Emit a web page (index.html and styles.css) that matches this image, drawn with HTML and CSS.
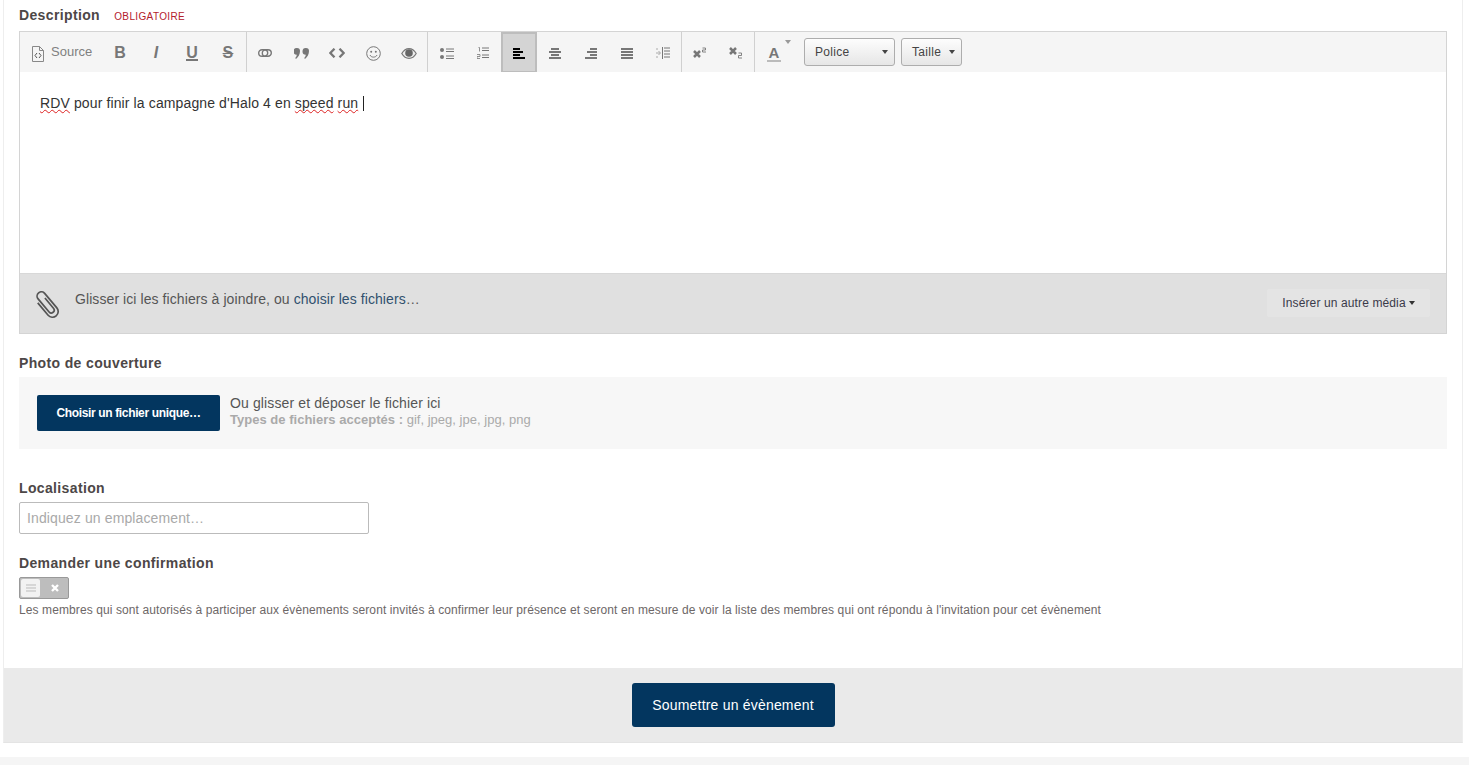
FILE: index.html
```html
<!DOCTYPE html>
<html lang="fr">
<head>
<meta charset="utf-8">
<title>Soumettre un évènement</title>
<link rel="stylesheet" href="styles.css">
</head>
<body>

<div class="panel">
  <div class="form">

    <div class="label first">Description <span class="required">OBLIGATOIRE</span></div>
    <div class="editor">
      <div class="toolbar">
        <div class="group">
          <span class="btn btn-source">
            <svg width="12" height="16" viewBox="0 0 12 16"><path d="M.5 .5h7l4 4v11h-11z M7.500 .5v4h4" fill="none" stroke="#888"/><path d="M5 7l-2 2.500 2 2.500M7 7l2 2.500-2 2.500" fill="none" stroke="#555"/></svg>
            <span class="source-text">Source</span>
          </span>
          <span class="btn"><b class="glyph">B</b></span>
          <span class="btn"><b class="glyph glyph-i">I</b></span>
          <span class="btn"><b class="glyph glyph-u">U</b></span>
          <span class="btn"><b class="glyph glyph-s">S</b></span>
        </div>
        <div class="group">
          <span class="btn"><svg width="14" height="8" viewBox="0 0 14 8"><rect x=".7" y=".7" width="9" height="6.600" rx="3.300" fill="none" stroke="#777" stroke-width="1.400"/><rect x="4.300" y=".7" width="9" height="6.600" rx="3.300" fill="none" stroke="#777" stroke-width="1.400"/></svg></span>
          <span class="btn"><svg width="15" height="11" viewBox="0 0 15 11"><path d="M3 0a3 3 0 0 1 3 3c0 3-1.500 6-4 8l-.8-1c1-1 1.500-2 1.600-3.200a3 3 0 0 1 .2-6.800zM12 0a3 3 0 0 1 3 3c0 3-1.500 6-4 8l-.8-1c1-1 1.500-2 1.600-3.200a3 3 0 0 1 .2-6.800z" fill="#777"/></svg></span>
          <span class="btn"><svg width="16" height="10" viewBox="0 0 16 10"><path d="M5.500 .7l-4.200 4.300 4.200 4.300M10.500 .7l4.200 4.300-4.200 4.300" fill="none" stroke="#777" stroke-width="2.300"/></svg></span>
          <span class="btn"><svg width="15" height="15" viewBox="0 0 15 15"><circle cx="7.500" cy="7.500" r="6.800" fill="none" stroke="#777"/><circle cx="5.200" cy="5.700" r="1" fill="#777"/><circle cx="9.800" cy="5.700" r="1" fill="#777"/><path d="M4 9c1 2.800 6 2.800 7 0" fill="none" stroke="#777"/></svg></span>
          <span class="btn"><svg width="16" height="11" viewBox="0 0 16 11"><path d="M.8 5.500c3.800-6.500 10.600-6.500 14.400 0-3.800 6.500-10.600 6.500-14.400 0z" fill="#eee" stroke="#777" stroke-width="1.200"/><circle cx="8" cy="5" r="3.800" fill="#666"/></svg></span>
        </div>
        <div class="group group-lists">
          <span class="btn"><svg width="14" height="11" viewBox="0 0 14 11"><circle cx="2" cy="2" r="2" fill="#777"/><circle cx="2" cy="9" r="2" fill="#777"/><path d="M6 1h8M6 3.500h8M6 8h8M6 10.500h8" stroke="#777"/></svg></span>
          <span class="btn"><svg width="12" height="12" viewBox="0 0 12 12"><path d="M1.500 .5h1v4M0 7.500h3v2h-3v2h3" fill="none" stroke="#777" stroke-width=".8"/><path d="M5 1h7M5 3.500h7M5 8h7M5 10.500h7" stroke="#777"/></svg></span>
          <span class="btn btn-on"><svg width="12" height="11" viewBox="0 0 12 11"><path d="M0 1h7M0 4h10M0 7h7M0 10h12" stroke="#000" stroke-width="2"/></svg></span>
          <span class="btn"><svg width="12" height="11" viewBox="0 0 12 11"><path d="M2 1h8M0 4h12M2 7h8M0 10h12" stroke="#777" stroke-width="2"/></svg></span>
          <span class="btn"><svg width="12" height="11" viewBox="0 0 12 11"><path d="M5 1h7M2 4h10M5 7h7M0 10h12" stroke="#777" stroke-width="2"/></svg></span>
          <span class="btn"><svg width="12" height="11" viewBox="0 0 12 11"><path d="M0 1h12M0 4h12M0 7h12M0 10h12" stroke="#777" stroke-width="2"/></svg></span>
          <span class="btn"><svg width="14" height="12" viewBox="0 0 14 12"><path d="M6.500 0v12" stroke="#777"/><path d="M8 1h6M8 4h6M8 7h6M8 10h6" stroke="#777"/><path d="M0 6h4M2.500 4l2 2-2 2M0 2h2M0 10h2" fill="none" stroke="#aaa"/></svg></span>
        </div>
        <div class="group">
          <span class="btn"><svg width="14" height="12" viewBox="0 0 14 12"><path d="M1 4l6 6M7 4l-6 6" stroke="#777" stroke-width="2.500"/><path d="M9.500 1h3v2h-3v2h3.500" fill="none" stroke="#777" stroke-width=".9"/></svg></span>
          <span class="btn"><svg width="14" height="12" viewBox="0 0 14 12"><path d="M1 1l6 6M7 1l-6 6" stroke="#777" stroke-width="2.500"/><path d="M9.500 6h3v2.500h-3v2.500h3.500" fill="none" stroke="#777" stroke-width=".9"/></svg></span>
        </div>
        <div class="group group-last">
          <span class="btn btn-color"><b class="color-a">A</b><span class="caret caret-top"></span></span>
          <span class="select select-police">Police<span class="caret"></span></span>
          <span class="select select-size">Taille<span class="caret"></span></span>
        </div>
      </div>

      <div class="editable">
        <span class="typo">RDV</span> pour finir la campagne d'Halo 4 en <span class="typo">speed</span> <span class="typo">run</span> <span class="cursor"></span>
      </div>

      <div class="dropzone">
        <svg class="clip" width="26" height="28" viewBox="0 0 26 28"><path transform="translate(13 14) rotate(-40) scale(.95) translate(-6 -16)" d="M0 8V25a6 6 0 0 0 12 0V5a4.500 4.500 0 0 0-9 0V23a3 3 0 0 0 6 0V9" fill="none" stroke="#555" stroke-width="1.800"/></svg>
        <span class="drop-text">Glisser ici les fichiers à joindre, ou <span class="link">choisir les fichiers</span>…</span>
        <span class="media-btn">Insérer un autre média<span class="caret caret-dark"></span></span>
      </div>
    </div>

    <div class="label label-photo">Photo de couverture</div>
    <div class="upload">
      <span class="upload-btn">Choisir un fichier unique…</span>
      <div class="upload-info">
        <div class="upload-hint">Ou glisser et déposer le fichier ici</div>
        <div class="upload-types"><b>Types de fichiers acceptés :</b> gif, jpeg, jpe, jpg, png</div>
      </div>
    </div>

    <div class="label label-place">Localisation</div>
    <input class="place" type="text" placeholder="Indiquez un emplacement…">

    <div class="label label-confirm">Demander une confirmation</div>
    <div class="toggle">
      <span class="knob"><svg width="10" height="8" viewBox="0 0 10 8"><path d="M0 1h10M0 4h10M0 7h10" stroke="#bbb"/></svg></span>
      <svg class="toggle-x" width="8" height="8" viewBox="0 0 8 8"><path d="M1 1l6 6M7 1l-6 6" stroke="#fff" stroke-width="2.400"/></svg>
    </div>
    <p class="help">Les membres qui sont autorisés à participer aux évènements seront invités à confirmer leur présence et seront en mesure de voir la liste des membres qui ont répondu à l'invitation pour cet évènement</p>

  </div>

  <div class="footer">
    <span class="submit">Soumettre un évènement</span>
  </div>
</div>

<div class="strip"></div>

</body>
</html>
```

FILE: styles.css
```css
html, body {
	margin: 0;
	padding: 0;
	background: #fff;
	overflow: hidden;
}
body {
	font-family: "Liberation Sans", Arial, sans-serif;
	font-size: 14px;
	letter-spacing: .12px;
	color: #555;
}
.panel {
	width: 1458px;
	margin-left: 3px;
	border-left: 1px solid #eee;
	border-right: 1px solid #eee;
	border-bottom: 1px solid #e4e4e4;
}
.form {
	height: 668px;
	box-sizing: border-box;
	padding: 5px 15px 0;
}

.label {
	font-weight: bold;
	line-height: 20px;
	letter-spacing: .36px;
	color: #4d4747;
	margin-bottom: 4px;
}
.label.first {
	margin-bottom: 6px;
}
.label-photo { margin-top: 19px; }
.label-place { margin-top: 29px; }
.label-confirm { margin-top: 19px; }
.required {
	font-weight: normal;
	font-size: 10px;
	line-height: 1;
	color: #b3202c;
	margin-left: 10px;
}

.editor {
	border: 1px solid #d4d4d4;
}
.toolbar {
	display: flex;
	height: 40px;
	background: #f5f5f5;
}
.group {
	display: flex;
	border-right: 1px solid #d0d0d0;
}
.group-lists {
	padding-left: 1px;
}
.group-last {
	border-right: 0;
	align-items: flex-start;
}
.btn {
	width: 36px;
	height: 40px;
	box-sizing: border-box;
	display: flex;
	align-items: center;
	justify-content: center;
	padding-top: 2px;
}
.btn-source {
	width: 82px;
	gap: 7px;
	justify-content: flex-start;
	padding: 3px 0 0 12px;
}
.source-text {
	font-size: 13px;
	letter-spacing: 0;
	color: #808080;
	margin: -5px 0 0 0;
}
.btn-on {
	background: #d4d4d4;
	border: 2px solid #bdbdbd;
	border-bottom-width: 1px;
}
.glyph {
	font-size: 16px;
	color: #777;
	line-height: 1;
}
.glyph-i {
	font-style: italic;
}
.glyph-u {
	border-bottom: 2px solid #777;
	line-height: 13px;
}
.glyph-s {
	text-decoration: line-through;
}
.btn-color {
	position: relative;
	width: 38px;
}
.color-a {
	font-size: 15px;
	color: #777;
	border-bottom: 2px solid #bbb;
	line-height: 15px;
	padding: 0 2px;
}
.caret {
	display: inline-block;
	border-top: 4px solid #444;
	border-left: 3px solid transparent;
	border-right: 3px solid transparent;
}
.caret-top {
	position: absolute;
	top: 8px;
	right: 2px;
	border-top-color: #999;
}
.select {
	height: 28px;
	box-sizing: border-box;
	margin-top: 6px;
	display: flex;
	align-items: center;
	justify-content: space-between;
	padding: 0 6px 0 10px;
	font-size: 12px;
	letter-spacing: .3px;
	color: #444;
	border: 1px solid #adadad;
	border-radius: 3px;
	background: linear-gradient(#fdfdfd, #e6e6e6);
}
.select-police {
	width: 91px;
	margin-left: 11px;
}
.select-size {
	width: 61px;
	margin-left: 6px;
}

.editable {
	height: 201px;
	box-sizing: border-box;
	padding: 22px 20px 0;
	background: #fff;
	color: #333;
	line-height: 18px;
}
.typo {
	text-decoration: underline wavy #d22;
	text-decoration-thickness: 1px;
	text-decoration-skip-ink: none;
}
.cursor {
	display: inline-block;
	width: 1px;
	height: 15px;
	margin-left: 1px;
	background: #222;
	vertical-align: -3px;
}

.dropzone {
	height: 60px;
	box-sizing: border-box;
	display: flex;
	align-items: center;
	padding: 0 16px 0 14px;
	background: #e0e0e0;
	border-top: 1px solid #d8d8d8;
}
.clip {
	margin-top: 2px;
}
.drop-text {
	margin-left: 15px;
	margin-top: -10px;
	letter-spacing: .08px;
	color: #555;
}
.link {
	color: #30506e;
}
.media-btn {
	margin-left: auto;
	margin-top: -2px;
	width: 163px;
	height: 28px;
	box-sizing: border-box;
	display: flex;
	align-items: center;
	justify-content: center;
	gap: 3px;
	font-size: 12px;
	color: #3a3a4a;
	background: #e4e4e4;
	border-radius: 2px;
}
.caret-dark {
	border-top-color: #333;
}

.upload {
	height: 72px;
	box-sizing: border-box;
	display: flex;
	align-items: center;
	padding: 0 18px;
	background: #f7f7f7;
}
.upload-btn {
	width: 183px;
	height: 36px;
	display: flex;
	align-items: center;
	justify-content: center;
	background: #03365f;
	color: #fff;
	font-size: 12px;
	font-weight: bold;
	letter-spacing: -.35px;
	border-radius: 2px;
}
.upload-info {
	margin-left: 10px;
	margin-top: -3px;
}
.upload-hint {
	line-height: 16px;
	color: #555;
}
.upload-types {
	line-height: 17px;
	font-size: 13px;
	letter-spacing: .02px;
	color: #aaa;
}

.place {
	display: block;
	width: 350px;
	height: 32px;
	box-sizing: border-box;
	margin: 0;
	padding: 0 7px;
	border: 1px solid #bbb;
	border-radius: 2px;
	font-family: inherit;
	font-size: 14px;
	letter-spacing: .12px;
	outline: 0;
}
.place::placeholder {
	color: #a9a9a9;
	opacity: 1;
}

.toggle {
	width: 50px;
	height: 22px;
	box-sizing: border-box;
	display: flex;
	align-items: center;
	background: #bdbdbd;
	border: 1px solid #999;
	border-radius: 2px;
}
.knob {
	width: 19px;
	height: 18px;
	margin-left: 1px;
	display: flex;
	align-items: center;
	justify-content: center;
	background: #f2f2f2;
	border-radius: 2px;
}
.toggle-x {
	margin-left: 11px;
}
.help {
	margin: 2px 0 0;
	font-size: 12px;
	line-height: 18px;
	letter-spacing: .1px;
	color: #6d6767;
}

.footer {
	height: 74px;
	display: flex;
	align-items: center;
	justify-content: center;
	background: #eaeaea;
}
.submit {
	width: 203px;
	height: 44px;
	display: flex;
	align-items: center;
	justify-content: center;
	background: #03365f;
	color: #fff;
	letter-spacing: .2px;
	border-radius: 3px;
}
.strip {
	height: 8px;
	margin-top: 14px;
	background: #f5f5f5;
}
```
